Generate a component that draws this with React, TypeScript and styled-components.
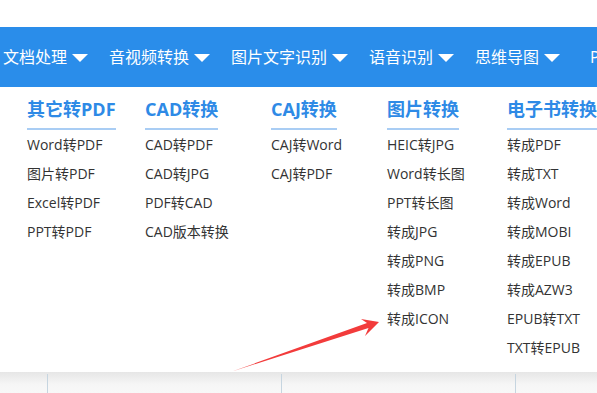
import React from "react";
import styled, { createGlobalStyle } from "styled-components";

const GlobalStyle = createGlobalStyle`
  html, body { margin: 0; padding: 0; background: #fff; }
  body { font-family: "Open Sans", "Noto Sans CJK SC", sans-serif; overflow: hidden; }
  * { box-sizing: border-box; }
`;

const Page = styled.div`
  position: relative; width: 597px; height: 393px; overflow: hidden; background: #fff;
`;

const TopStrip = styled.div`
  height: 27px; background: #fff;
`;

const NavBar = styled.nav`
  height: 60px; background: #2a8dea; display: flex; align-items: center;
  padding-left: 3px; white-space: nowrap;
`;

const NavItem = styled.div<{ $extra?: boolean }>`
  display: flex; align-items: center; flex-shrink: 0; margin-right: 21px;
  margin-left: ${({ $extra }) => ($extra ? "9px" : "0")};
  color: #fff; font-size: 16px; line-height: 20px;
`;

const Caret = styled.span`
  display: inline-block; margin-left: 5px; margin-top: 2px;
  border-left: 8px solid transparent; border-right: 8px solid transparent;
  border-top: 8px solid #fff;
`;

const Dropdown = styled.div`
  display: grid; grid-template-columns: 118px 126px 116px 120px 1fr;
  padding: 10px 0 10px 27px; background: #fff; height: 285px;
`;

const Column = styled.div`
  display: flex; flex-direction: column; align-items: flex-start;
`;

const Heading = styled.div`
  display: inline-block; font-size: 18px; line-height: 24px; font-weight: 700;
  color: #2e8ae6; padding-bottom: 7px; border-bottom: 2px solid #a9cdf4; white-space: nowrap;
`;

const List = styled.ul`
  list-style: none; margin: 0; padding: 0;
`;

const Item = styled.li`
  font-size: 14px; line-height: 29px; color: #333; white-space: nowrap;
`;

const TableStrip = styled.div`
  display: grid; grid-template-columns: 48px 234px 234px 1fr; height: 21px;
  background: linear-gradient(#e6e6e6, #f6f6f6 60%, #f8f8f8);
`;

const Cell = styled.div`
  margin-top: 2px; border-right: 1px solid #c6d5e0;
  &:last-child { border-right: none; }
`;

const ArrowSvg = styled.svg`
  position: absolute; left: 0; top: 0; pointer-events: none;
`;

const navItems = ["文档处理", "音视频转换", "图片文字识别", "语音识别", "思维导图", "PDF转换"];

const columns: { title: string; items: string[] }[] = [
  { title: "其它转PDF", items: ["Word转PDF", "图片转PDF", "Excel转PDF", "PPT转PDF"] },
  { title: "CAD转换", items: ["CAD转PDF", "CAD转JPG", "PDF转CAD", "CAD版本转换"] },
  { title: "CAJ转换", items: ["CAJ转Word", "CAJ转PDF"] },
  {
    title: "图片转换",
    items: ["HEIC转JPG", "Word转长图", "PPT转长图", "转成JPG", "转成PNG", "转成BMP", "转成ICON"],
  },
  {
    title: "电子书转换",
    items: ["转成PDF", "转成TXT", "转成Word", "转成MOBI", "转成EPUB", "转成AZW3", "EPUB转TXT", "TXT转EPUB"],
  },
];

export default function App() {
  return (
    <Page>
      <GlobalStyle />
      <TopStrip />
      <NavBar>
        {navItems.map((n, idx) => (
          <NavItem key={n} $extra={idx === navItems.length - 1}>
            {n}
            <Caret />
          </NavItem>
        ))}
      </NavBar>
      <Dropdown>
        {columns.map((c) => (
          <Column key={c.title}>
            <Heading>{c.title}</Heading>
            <List>
              {c.items.map((i) => (
                <Item key={i}>{i}</Item>
              ))}
            </List>
          </Column>
        ))}
      </Dropdown>
      <TableStrip>
        <Cell />
        <Cell />
        <Cell />
        <Cell />
      </TableStrip>
      <ArrowSvg width="597" height="393" viewBox="0 0 597 393">
        <polygon
          points="232,371.5 368.5,328 365,336 379,322 361,319 367,323"
          fill="#f23b3b"
        />
      </ArrowSvg>
    </Page>
  );
}
